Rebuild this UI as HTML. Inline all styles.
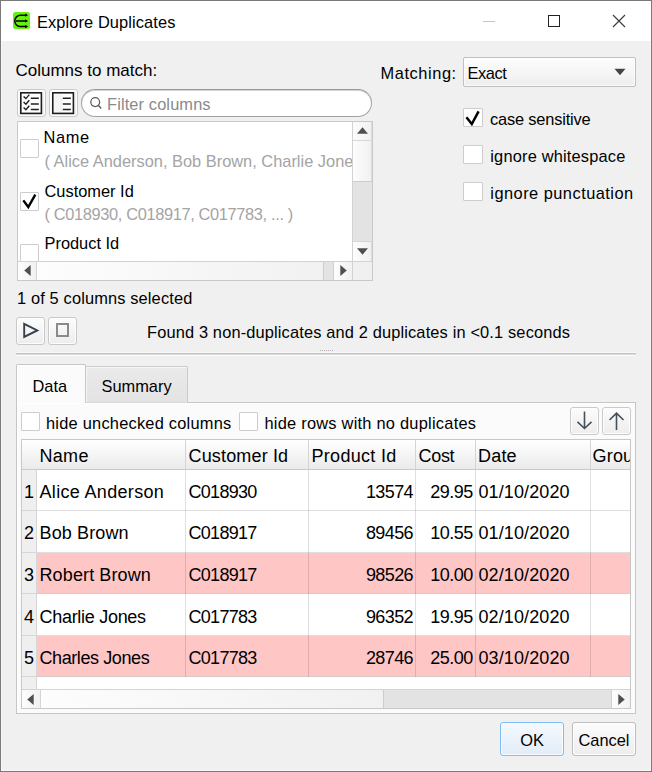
<!DOCTYPE html>
<html><head><meta charset="utf-8">
<style>
*{box-sizing:border-box;margin:0;padding:0}
html,body{width:652px;height:772px;overflow:hidden;background:#f0f0f0}
body{position:relative;font-family:"Liberation Sans",sans-serif;font-size:16.4px;color:#000;line-height:1}
.a{position:absolute}
.t{position:absolute;white-space:nowrap;line-height:1}
.btn{position:absolute;border:1px solid #c9c9c9;border-radius:3px;background:linear-gradient(#fcfcfc,#ededed);box-shadow:inset 0 0 0 1px rgba(255,255,255,0.85)}
.sbb{position:absolute;background:linear-gradient(90deg,#fdfdfd,#f1f1f1)}
.cb{position:absolute;width:19px;height:19px;border:1px solid #cdcdcd;border-radius:1px;background:#fff}
</style></head><body>

<div class="a" style="left:0px;top:0px;width:652px;height:41px;background:#fff"></div>
<div class="a" style="left:0px;top:0px;width:652px;height:772px;border:1px solid #7a7a7a"></div>
<div class="a" style="left:1px;top:41px;width:1px;height:730px;background:#f8f8f8"></div>
<div class="a" style="left:650px;top:41px;width:1px;height:730px;background:#f8f8f8"></div>
<div class="a" style="left:1px;top:770px;width:650px;height:1px;background:#f8f8f8"></div>
<svg class="a" style="left:13px;top:12px" width="17" height="17" viewBox="0 0 17 17">
<rect x="0" y="0" width="17" height="17" rx="2.5" fill="#66f010"/>
<path d="M14 3.2 H7.5 A5.7 5.7 0 0 0 7.5 14.6 H14 M3 8.9 H14" fill="none" stroke="#000" stroke-width="1.5"/>
<path d="M12.2 1.6 L15 3.2 L12.2 4.8Z M12.2 7.3 L15 8.9 L12.2 10.5Z M12.2 13 L15 14.6 L12.2 16.2Z" fill="#000"/>
</svg>
<div class="t" style="left:37px;top:14px;letter-spacing:0.1px">Explore Duplicates</div>
<div class="a" style="left:483px;top:21px;width:12px;height:1px;background:#c4c4c4"></div>
<div class="a" style="left:548px;top:15px;width:12px;height:12px;border:1px solid #222"></div>
<svg class="a" style="left:612px;top:14px" width="14" height="14" viewBox="0 0 14 14">
<path d="M1 1 L13 13 M13 1 L1 13" stroke="#3c3c3c" stroke-width="1.15" fill="none"/></svg>
<div class="t" style="left:15.5px;top:62px;font-size:17px">Columns to match:</div>
<div class="btn" style="left:17px;top:89px;width:29px;height:28px"></div>
<svg class="a" style="left:17px;top:89px" width="29" height="28" viewBox="0 0 29 28"><rect x="3.8" y="3.8" width="20.6" height="20.6" fill="#fff" stroke="#1e1e1e" stroke-width="1.6"/><path d="M6.6 7.4 L8.9 9.6 L12.3 5.6 M6.6 13 L8.9 15.2 L12.3 11.2 M6.6 18.6 L8.9 20.8 L12.3 16.8" fill="none" stroke="#222" stroke-width="1.4"/><path d="M13.8 9.3 H21.8 M13.8 14.9 H21.8 M13.8 20.5 H21.8" stroke="#222" stroke-width="1.5"/></svg>
<div class="btn" style="left:49px;top:89px;width:29px;height:28px"></div>
<svg class="a" style="left:49px;top:89px" width="29" height="28" viewBox="0 0 29 28"><rect x="3.8" y="3.8" width="20.6" height="20.6" fill="#fff" stroke="#1e1e1e" stroke-width="1.6"/><rect x="5.5" y="5.5" width="8" height="17.5" fill="#f4f4f4"/><path d="M13.8 9.3 H21.8 M13.8 14.9 H21.8 M13.8 20.5 H21.8" stroke="#222" stroke-width="1.5"/></svg>
<div class="a" style="left:80.6px;top:89px;width:291.8px;height:28px;border:1px solid #a2a2a2;border-top-color:#9a9a9a;border-radius:14px;background:#fff;box-shadow:inset 0 1px 0 #d4d4d4"></div>
<svg class="a" style="left:86px;top:93px" width="18" height="18" viewBox="0 0 18 18">
<circle cx="9.2" cy="9.1" r="4.4" fill="none" stroke="#5a5a5a" stroke-width="1.25"/>
<path d="M12.3 12.3 L15.2 15.5" stroke="#5a5a5a" stroke-width="1.4"/></svg>
<div class="t" style="left:107px;top:96px;letter-spacing:0.12px;color:#8a8a8a">Filter columns</div>
<div class="a" style="left:17px;top:121px;width:356px;height:160px;border:1px solid #c9c9c9;background:#fff"></div>
<div class="a" style="left:18px;top:122px;width:334px;height:139px;overflow:hidden">
<div class="cb" style="left:2px;top:17px"></div>
<div class="cb" style="left:2px;top:69.5px"></div>
<div class="cb" style="left:2px;top:122px"></div>
<svg class="a" style="left:2px;top:69px" width="20" height="20" viewBox="0 0 20 20"><path d="M3.3 9.4 L8.3 16 L15.3 3.6" fill="none" stroke="#000" stroke-width="2.4"/></svg>
<div class="t" style="left:25.5px;top:7px;letter-spacing:0.6px">Name</div>
<div class="t" style="left:26.5px;top:31px;color:#a4a4a4">( Alice Anderson, Bob Brown, Charlie Jones, Robert Brown, Charles Jones )</div>
<div class="t" style="left:26.5px;top:60.5px">Customer Id</div>
<div class="t" style="left:26.5px;top:84px;letter-spacing:-0.36px;color:#a4a4a4">( C018930, C018917, C017783, ... )</div>
<div class="t" style="left:26.5px;top:113px">Product Id</div>
</div>
<div class="a" style="left:352px;top:122px;width:20px;height:158px;background:#e3e3e3;border-left:1px solid #d2d2d2"></div>
<div class="sbb" style="left:353px;top:122px;width:19px;height:19px;border-bottom:1px solid #d6d6d6;border-right:1px solid #dcdcdc"></div>
<div class="sbb" style="left:353px;top:141px;width:19px;height:41px;border-bottom:1px solid #cdcdcd;border-right:1px solid #dcdcdc"></div>
<div class="sbb" style="left:353px;top:241px;width:19px;height:20px;border-top:1px solid #d6d6d6;border-right:1px solid #dcdcdc"></div>
<svg class="a" style="left:356.5px;top:127px" width="11" height="7" viewBox="0 0 11 7"><path d="M0 6.7 H11 L5.5 0.2Z" fill="#4f4f4f"/></svg>
<svg class="a" style="left:356.5px;top:248px" width="11" height="7" viewBox="0 0 11 7"><path d="M0 0.3 H11 L5.5 6.8Z" fill="#4f4f4f"/></svg>
<div class="a" style="left:18px;top:261px;width:354px;height:19px;background:#e3e3e3;border-top:1px solid #d2d2d2"></div>
<div class="sbb" style="left:18px;top:262px;width:19px;height:18px;border-right:1px solid #d6d6d6"></div>
<div class="sbb" style="left:37px;top:262px;width:287px;height:18px;border-right:1px solid #cdcdcd"></div>
<div class="sbb" style="left:333px;top:262px;width:19px;height:18px;border-left:1px solid #d2d2d2"></div>
<div class="a" style="left:352px;top:262px;width:20px;height:18px;background:#f0f0f0;border-left:1px solid #d2d2d2"></div>
<svg class="a" style="left:23.5px;top:265px" width="7" height="11" viewBox="0 0 7 11"><path d="M6.7 0 V11 L0.2 5.5Z" fill="#4f4f4f"/></svg>
<svg class="a" style="left:339.5px;top:265px" width="7" height="11" viewBox="0 0 7 11"><path d="M0.3 0 V11 L6.8 5.5Z" fill="#4f4f4f"/></svg>
<div class="t" style="left:380.5px;top:65px;letter-spacing:0.57px">Matching:</div>
<div class="a" style="left:463px;top:57px;width:173px;height:30px;border:1px solid #c0c0c0;border-radius:2px;background:linear-gradient(#fdfdfd,#eeeeee);box-shadow:inset 0 0 0 1px rgba(255,255,255,0.7)"></div>
<div class="t" style="left:467.5px;top:65px;letter-spacing:-0.4px">Exact</div>
<svg class="a" style="left:614px;top:68px" width="12" height="8" viewBox="0 0 12 8"><path d="M0.5 0.8 H11.5 L6 7.2Z" fill="#444"/></svg>
<div class="cb" style="left:463px;top:108px;width:20px"></div>
<div class="cb" style="left:463px;top:145px;width:20px"></div>
<div class="cb" style="left:463px;top:182px;width:20px"></div>
<svg class="a" style="left:463px;top:108px" width="20" height="20" viewBox="0 0 20 20"><path d="M3.4 9.3 L8.8 16 L15.6 3.4" fill="none" stroke="#000" stroke-width="2.5"/></svg>
<div class="t" style="left:490px;top:110.5px;letter-spacing:-0.18px">case sensitive</div>
<div class="t" style="left:490.3px;top:147.5px;letter-spacing:0.18px">ignore whitespace</div>
<div class="t" style="left:490.3px;top:184.5px;letter-spacing:0.47px">ignore punctuation</div>
<div class="t" style="left:17px;top:289.5px;letter-spacing:0.14px">1 of 5 columns selected</div>
<div class="btn" style="left:16px;top:317px;width:29px;height:28px"></div>
<svg class="a" style="left:16px;top:317px" width="29" height="28" viewBox="0 0 29 28"><path d="M8.2 6.9 L21.3 13.4 L8.2 19.9Z" fill="none" stroke="#36414c" stroke-width="1.9" stroke-linejoin="miter"/></svg>
<div class="btn" style="left:48px;top:317px;width:29px;height:28px"></div>
<div class="a" style="left:55.5px;top:323.3px;width:13.5px;height:13.5px;border:2px solid #8a8a8a"></div>
<div class="t" style="left:147px;top:324px;letter-spacing:0.146px">Found 3 non-duplicates and 2 duplicates in &lt;0.1 seconds</div>
<div class="a" style="left:320px;top:350px;width:14px;height:1px;background:repeating-linear-gradient(90deg,#b4b4b4 0 1px,transparent 1px 2px)"></div>
<div class="a" style="left:16px;top:352px;width:620px;height:1px;background:#f7f7f7"></div>
<div class="a" style="left:16px;top:353px;width:620px;height:1px;background:#c4c4c4"></div>
<div class="a" style="left:16px;top:354px;width:620px;height:1px;background:#dadada"></div>
<div class="a" style="left:16px;top:355px;width:620px;height:1px;background:#fbfbfb"></div>
<div class="a" style="left:16px;top:402px;width:620px;height:312px;border:1px solid #c6c6c6;background:#fbfbfb;box-shadow:inset 1px 1px 0 #fff"></div>
<div class="a" style="left:85px;top:366px;width:103px;height:37px;border:1px solid #cbcbcb;border-bottom:1px solid #d8d8d8;border-radius:2px 2px 0 0;background:linear-gradient(#eaeaea,#e3e3e3);box-shadow:inset 1px 1px 0 #f6f6f6"></div>
<div class="a" style="left:16px;top:364px;width:70px;height:39px;border:1px solid #c6c6c6;border-bottom:none;border-radius:2px 2px 0 0;background:#fbfbfb;box-shadow:inset 1px 1px 0 #fff"></div>
<div class="t" style="left:32.5px;top:378px">Data</div>
<div class="t" style="left:101.5px;top:378px">Summary</div>
<div class="cb" style="left:21px;top:412px"></div>
<div class="t" style="left:46px;top:414.5px;letter-spacing:0.23px">hide unchecked columns</div>
<div class="cb" style="left:239px;top:412px"></div>
<div class="t" style="left:264.5px;top:414.5px;letter-spacing:0.24px">hide rows with no duplicates</div>
<div class="btn" style="left:570px;top:407px;width:29px;height:28px"></div>
<div class="btn" style="left:602px;top:407px;width:29px;height:28px"></div>
<svg class="a" style="left:570px;top:407px" width="29" height="28" viewBox="0 0 29 28"><path d="M14.5 4.5 V21 M7.5 14.8 L14.5 21.5 L21.5 14.8" fill="none" stroke="#46505a" stroke-width="1.6"/></svg>
<svg class="a" style="left:602px;top:407px" width="29" height="28" viewBox="0 0 29 28"><path d="M14.5 23 V6.5 M7.5 13 L14.5 6.2 L21.5 13" fill="none" stroke="#46505a" stroke-width="1.6"/></svg>
<div class="a" style="left:21px;top:439px;width:610px;height:270px;border:1px solid #c8c8c8;background:#fff"></div>
<div class="a" style="left:22px;top:440px;width:608px;height:268px;overflow:hidden;font-size:18px">
<div class="a" style="left:0px;top:0px;width:620px;height:29px;background:linear-gradient(#ffffff,#ebebeb)"></div>
<div class="a" style="left:0px;top:29px;width:620px;height:1px;background:#c9c9c9"></div>
<div class="a" style="left:163px;top:0px;width:1px;height:29px;background:#d5d5d5"></div>
<div class="a" style="left:286px;top:0px;width:1px;height:29px;background:#d5d5d5"></div>
<div class="a" style="left:393px;top:0px;width:1px;height:29px;background:#d5d5d5"></div>
<div class="a" style="left:453px;top:0px;width:1px;height:29px;background:#d5d5d5"></div>
<div class="a" style="left:568px;top:0px;width:1px;height:29px;background:#d5d5d5"></div>
<div class="t" style="left:17.5px;top:7px;letter-spacing:0.3px">Name</div>
<div class="t" style="left:166.5px;top:7px;letter-spacing:0.16px">Customer Id</div>
<div class="t" style="left:289.5px;top:7px;letter-spacing:0.3px">Product Id</div>
<div class="t" style="left:396.5px;top:7px;letter-spacing:-0.3px">Cost</div>
<div class="t" style="left:456.0px;top:7px;letter-spacing:0.2px">Date</div>
<div class="t" style="left:570.5px;top:7px;letter-spacing:0.2px">Group</div>
<div class="a" style="left:0px;top:30px;width:14px;height:219px;background:#efefef"></div>
<div class="a" style="left:14px;top:30px;width:1px;height:219px;background:#d6d6d6"></div>
<div class="a" style="left:15px;top:70px;width:600px;height:1px;background:#dedede"></div>
<div class="a" style="left:0px;top:70px;width:14px;height:1px;background:#d6d6d6"></div>
<div class="t" style="left:0px;top:42.8px;width:14px;text-align:center">1</div>
<div class="t" style="left:17.5px;top:42.8px;letter-spacing:0.33px">Alice Anderson</div>
<div class="t" style="left:166.5px;top:42.8px;letter-spacing:-0.7px">C018930</div>
<div class="t" style="left:286px;top:42.8px;letter-spacing:-0.6px;width:105px;text-align:right">13574</div>
<div class="t" style="left:393px;top:42.8px;letter-spacing:-0.55px;width:57.6px;text-align:right">29.95</div>
<div class="t" style="left:456.5px;top:42.8px;letter-spacing:0.11px">01/10/2020</div>
<div class="a" style="left:15px;top:112px;width:600px;height:1px;background:#dedede"></div>
<div class="a" style="left:0px;top:112px;width:14px;height:1px;background:#d6d6d6"></div>
<div class="t" style="left:0px;top:84.0px;width:14px;text-align:center">2</div>
<div class="t" style="left:17.5px;top:84.0px;letter-spacing:0.12px">Bob Brown</div>
<div class="t" style="left:166.5px;top:84.0px;letter-spacing:-0.7px">C018917</div>
<div class="t" style="left:286px;top:84.0px;letter-spacing:-0.6px;width:105px;text-align:right">89456</div>
<div class="t" style="left:393px;top:84.0px;letter-spacing:-0.55px;width:57.6px;text-align:right">10.55</div>
<div class="t" style="left:456.5px;top:84.0px;letter-spacing:0.11px">01/10/2020</div>
<div class="a" style="left:15px;top:113px;width:600px;height:40px;background:#ffc6c6"></div>
<div class="a" style="left:15px;top:153px;width:600px;height:1px;background:#dcc8c8"></div>
<div class="a" style="left:0px;top:153px;width:14px;height:1px;background:#d6d6d6"></div>
<div class="t" style="left:0px;top:125.8px;width:14px;text-align:center">3</div>
<div class="t" style="left:17.5px;top:125.8px;letter-spacing:0.12px">Robert Brown</div>
<div class="t" style="left:166.5px;top:125.8px;letter-spacing:-0.7px">C018917</div>
<div class="t" style="left:286px;top:125.8px;letter-spacing:-0.6px;width:105px;text-align:right">98526</div>
<div class="t" style="left:393px;top:125.8px;letter-spacing:-0.55px;width:57.6px;text-align:right">10.00</div>
<div class="t" style="left:456.5px;top:125.8px;letter-spacing:0.11px">02/10/2020</div>
<div class="a" style="left:15px;top:195px;width:600px;height:1px;background:#dedede"></div>
<div class="a" style="left:0px;top:195px;width:14px;height:1px;background:#d6d6d6"></div>
<div class="t" style="left:0px;top:167.8px;width:14px;text-align:center">4</div>
<div class="t" style="left:17.5px;top:167.8px;letter-spacing:-0.29px">Charlie Jones</div>
<div class="t" style="left:166.5px;top:167.8px;letter-spacing:-0.7px">C017783</div>
<div class="t" style="left:286px;top:167.8px;letter-spacing:-0.6px;width:105px;text-align:right">96352</div>
<div class="t" style="left:393px;top:167.8px;letter-spacing:-0.55px;width:57.6px;text-align:right">19.95</div>
<div class="t" style="left:456.5px;top:167.8px;letter-spacing:0.11px">02/10/2020</div>
<div class="a" style="left:15px;top:196px;width:600px;height:40px;background:#ffc6c6"></div>
<div class="a" style="left:15px;top:236px;width:600px;height:1px;background:#dcc8c8"></div>
<div class="a" style="left:0px;top:236px;width:14px;height:1px;background:#d6d6d6"></div>
<div class="t" style="left:0px;top:208.5px;width:14px;text-align:center">5</div>
<div class="t" style="left:17.5px;top:208.5px;letter-spacing:-0.41px">Charles Jones</div>
<div class="t" style="left:166.5px;top:208.5px;letter-spacing:-0.7px">C017783</div>
<div class="t" style="left:286px;top:208.5px;letter-spacing:-0.6px;width:105px;text-align:right">28746</div>
<div class="t" style="left:393px;top:208.5px;letter-spacing:-0.55px;width:57.6px;text-align:right">25.00</div>
<div class="t" style="left:456.5px;top:208.5px;letter-spacing:0.11px">03/10/2020</div>
<div class="a" style="left:163px;top:30px;width:1px;height:207px;background:rgba(0,0,0,0.125)"></div>
<div class="a" style="left:286px;top:30px;width:1px;height:207px;background:rgba(0,0,0,0.125)"></div>
<div class="a" style="left:393px;top:30px;width:1px;height:207px;background:rgba(0,0,0,0.125)"></div>
<div class="a" style="left:453px;top:30px;width:1px;height:207px;background:rgba(0,0,0,0.125)"></div>
<div class="a" style="left:568px;top:30px;width:1px;height:207px;background:rgba(0,0,0,0.125)"></div>
</div>
<div class="a" style="left:22px;top:689px;width:608px;height:19px;background:#e3e3e3;border-top:1px solid #d4d4d4"></div>
<div class="sbb" style="left:22px;top:690px;width:19px;height:18px;border-right:1px solid #d6d6d6"></div>
<div class="sbb" style="left:41px;top:690px;width:343px;height:18px;border-right:1px solid #cdcdcd"></div>
<div class="sbb" style="left:611px;top:690px;width:19px;height:18px;border-left:1px solid #d2d2d2"></div>
<svg class="a" style="left:27px;top:693.5px" width="7" height="11" viewBox="0 0 7 11"><path d="M6.7 0 V11 L0.2 5.5Z" fill="#4f4f4f"/></svg>
<svg class="a" style="left:617.5px;top:693.5px" width="7" height="11" viewBox="0 0 7 11"><path d="M0.3 0 V11 L6.8 5.5Z" fill="#4f4f4f"/></svg>
<div class="a" style="left:500px;top:722px;width:64px;height:34px;border:1px solid #7bbff6;border-radius:3px;background:linear-gradient(#f4f9fe,#e2edf8);box-shadow:inset 0 0 0 1px rgba(255,255,255,0.8)"></div>
<div class="t" style="left:500px;top:731.5px;width:64px;text-align:center">OK</div>
<div class="btn" style="left:572px;top:722px;width:64px;height:34px;border-color:#bdbdbd"></div>
<div class="t" style="left:572px;top:731.5px;width:64px;text-align:center">Cancel</div>
</body></html>
